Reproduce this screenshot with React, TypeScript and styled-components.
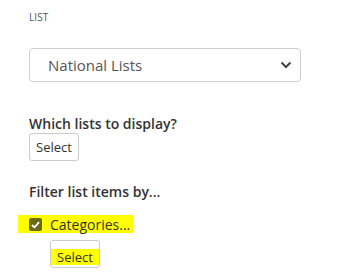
import React from "react";
import styled, { createGlobalStyle } from "styled-components";

const Global = createGlobalStyle`
  html, body { margin: 0; padding: 0; background: #fff; }
  body { font-family: "Open Sans", "Liberation Sans", sans-serif; }
`;

const Page = styled.div`
  padding: 10px 0 0 29px;
  width: 338px;
  height: 273px;
  box-sizing: border-box;
  overflow: hidden;
`;

const Caption = styled.div`
  font-size: 10px;
  line-height: 14px;
  color: #555;
  text-transform: uppercase;
  letter-spacing: 0.1px;
`;

const SelectBox = styled.div`
  margin-top: 24px;
  width: 272px;
  height: 34px;
  box-sizing: border-box;
  border: 1px solid #cfcfcf;
  border-radius: 4px;
  display: flex;
  align-items: center;
  justify-content: space-between;
  padding: 0 8px 0 18px;
  font-size: 15px;
  color: #555;
`;

const Heading = styled.div<{ $top: number }>`
  margin-top: ${(p) => p.$top}px;
  font-size: 14px;
  font-weight: 600;
  line-height: 18px;
  color: #333;
`;

const Button = styled.div<{ $indent?: number }>`
  margin-left: ${(p) => p.$indent ?? 0}px;
  width: 50px;
  height: 28px;
  box-sizing: border-box;
  border: 1px solid #ccc;
  border-radius: 3px;
  display: flex;
  align-items: center;
  justify-content: center;
  font-size: 13px;
  color: #333;
  background: #fff;
`;

const HighlightButton = styled(Button)`
  align-items: flex-end;
  padding-bottom: 2px;
`;

const Mark = styled.span`
  display: block;
  width: 100%;
  background: #ffff00;
  text-align: center;
  line-height: 16px;
`;

const CheckRow = styled.label`
  margin: 14px 0 0 -11px;
  padding-left: 11px;
  width: 115px;
  height: 18px;
  box-sizing: border-box;
  background: #ffff00;
  display: flex;
  align-items: center;
  gap: 8px;
  font-size: 14px;
  color: #333;
`;

const Box = styled.span`
  width: 13px;
  height: 13px;
  border-radius: 2px;
  background: #6c6a10;
  display: flex;
  align-items: center;
  justify-content: center;
  margin-top: 1px;
`;

const Spacer = styled.div<{ $h: number }>`
  height: ${(p) => p.$h}px;
`;

export default function App() {
  return (
    <>
      <Global />
      <Page>
        <Caption>List</Caption>
        <SelectBox>
          <span>National Lists</span>
          <svg width="12" height="8" viewBox="0 0 12 8">
            <path d="M1.5 1.5 L6 6 L10.5 1.5" fill="none" stroke="#444" strokeWidth="2" />
          </svg>
        </SelectBox>
        <Heading $top={33}>Which lists to display?</Heading>
        <Button>Select</Button>
        <Heading $top={22}>Filter list items by...</Heading>
        <CheckRow>
          <Box>
            <svg width="9" height="8" viewBox="0 0 9 8">
              <path d="M1 4 L3.5 6.5 L8 1.2" fill="none" stroke="#fff" strokeWidth="1.8" />
            </svg>
          </Box>
          Categories...
        </CheckRow>
        <Spacer $h={7} />
        <HighlightButton $indent={21}>
          <Mark>Select</Mark>
        </HighlightButton>
      </Page>
    </>
  );
}
